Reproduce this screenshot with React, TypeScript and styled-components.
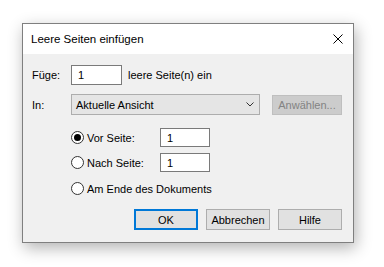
import { createGlobalStyle, styled } from "styled-components";

const GlobalStyle = createGlobalStyle`
  body {
    margin: 0;
    background: #ffffff;
    font-family: "Segoe UI", "Liberation Sans", Arial, sans-serif;
    font-size: 11px;
    color: #000000;
  }
`;

const Page = styled.div`
  padding: 23px 0 30px 22px;
`;

const Dialog = styled.div`
  width: 330px;
  border: 1px solid #7f7f7f;
  background: #f0f0f0;
  box-shadow: 2px 5px 15px rgba(0, 0, 0, 0.3);
`;

const TitleBar = styled.div`
  height: 30px;
  background: #ffffff;
  display: flex;
  align-items: center;
  justify-content: space-between;
  padding: 0 10px 0 8px;
  font-size: 11.5px;
`;

const CloseIcon = () => (
  <svg width="10" height="10" viewBox="0 0 10 10">
    <path d="M0.5 0.5 L9.5 9.5 M9.5 0.5 L0.5 9.5" stroke="#000" strokeWidth="1" />
  </svg>
);

const Body = styled.div`
  padding: 11px 11px 12px 9px;
  display: flex;
  flex-direction: column;
`;

const Row = styled.div<{ $gap?: number }>`
  display: flex;
  align-items: center;
  margin-bottom: ${(p) => p.$gap ?? 0}px;
`;

const Label = styled.span`
  width: 39px;
  flex-shrink: 0;
`;

const TextBox = styled.div<{ $width: number; $height: number }>`
  box-sizing: border-box;
  width: ${(p) => p.$width}px;
  height: ${(p) => p.$height}px;
  background: #ffffff;
  border: 1px solid #7a7a7a;
  display: flex;
  align-items: center;
  padding-left: 6px;
`;

const After = styled.span`
  margin-left: 6px;
`;

const Combo = styled.div`
  box-sizing: border-box;
  width: 189px;
  height: 21px;
  background: #e5e5e5;
  border: 1px solid #adadad;
  display: flex;
  align-items: center;
  justify-content: space-between;
  padding: 0 5px 0 4px;
`;

const Chevron = () => (
  <svg width="8" height="5" viewBox="0 0 8 5">
    <path d="M0.5 0.5 L4 4 L7.5 0.5" stroke="#333" strokeWidth="1" fill="none" />
  </svg>
);

const DisabledButton = styled.div`
  box-sizing: border-box;
  width: 70px;
  height: 20px;
  margin-left: 12px;
  background: #cccccc;
  border: 1px solid #bfbfbf;
  color: #838383;
  display: flex;
  align-items: center;
  justify-content: center;
`;

const Options = styled.div`
  margin: 13px 0 0 39px;
  display: flex;
  flex-direction: column;
`;

const OptionRow = styled.div<{ $gap: number }>`
  display: flex;
  align-items: center;
  height: 19px;
  margin-bottom: ${(p) => p.$gap}px;
`;

const RadioLabel = styled.div`
  width: 89px;
  display: flex;
  align-items: center;
  white-space: nowrap;
`;

const Radio = styled.span<{ $checked?: boolean }>`
  box-sizing: border-box;
  width: 13px;
  height: 13px;
  border-radius: 50%;
  border: 1px solid #333333;
  background: #ffffff;
  margin-right: 3px;
  display: flex;
  align-items: center;
  justify-content: center;
  flex-shrink: 0;

  &::after {
    content: "";
    display: ${(p) => (p.$checked ? "block" : "none")};
    width: 7px;
    height: 7px;
    border-radius: 50%;
    background: #000000;
  }
`;

const Buttons = styled.div`
  display: flex;
  justify-content: flex-end;
  gap: 8px;
  margin-top: 11px;
`;

const Button = styled.div<{ $default?: boolean }>`
  box-sizing: border-box;
  width: 64px;
  height: 21px;
  background: #e1e1e1;
  border: ${(p) => (p.$default ? "2px solid #0078d7" : "1px solid #adadad")};
  display: flex;
  align-items: center;
  justify-content: center;
`;

export default function App() {
  return (
    <Page>
      <GlobalStyle />
      <Dialog>
        <TitleBar>
          <span>Leere Seiten einfügen</span>
          <CloseIcon />
        </TitleBar>
        <Body>
          <Row $gap={9}>
            <Label>Füge:</Label>
            <TextBox $width={51} $height={20}>1</TextBox>
            <After>leere Seite(n) ein</After>
          </Row>
          <Row>
            <Label>In:</Label>
            <Combo>
              <span>Aktuelle Ansicht</span>
              <Chevron />
            </Combo>
            <DisabledButton>Anwählen...</DisabledButton>
          </Row>
          <Options>
            <OptionRow $gap={6}>
              <RadioLabel>
                <Radio $checked />
                Vor Seite:
              </RadioLabel>
              <TextBox $width={50} $height={19}>1</TextBox>
            </OptionRow>
            <OptionRow $gap={7}>
              <RadioLabel>
                <Radio />
                Nach Seite:
              </RadioLabel>
              <TextBox $width={50} $height={19}>1</TextBox>
            </OptionRow>
            <OptionRow $gap={0}>
              <RadioLabel>
                <Radio />
                Am Ende des Dokuments
              </RadioLabel>
            </OptionRow>
          </Options>
          <Buttons>
            <Button $default>OK</Button>
            <Button>Abbrechen</Button>
            <Button>Hilfe</Button>
          </Buttons>
        </Body>
      </Dialog>
    </Page>
  );
}
